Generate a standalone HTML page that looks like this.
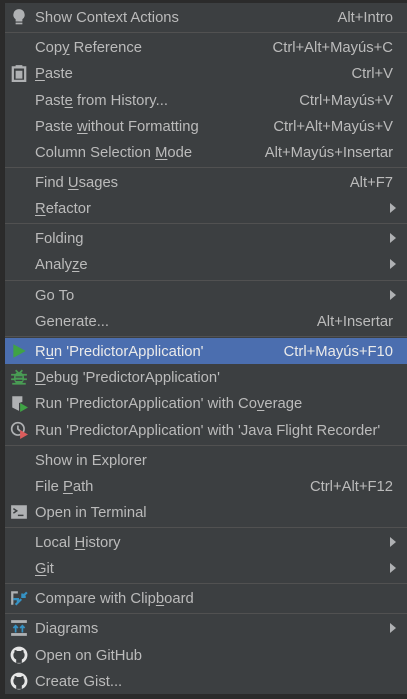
<!DOCTYPE html>
<html><head><style>
body{margin:0;width:407px;height:699px;background:#2b2b2b;overflow:hidden;font-family:"Liberation Sans",sans-serif;}
#m{position:absolute;left:4px;top:3px;width:403px;height:691px;background:#3c3f41;border-left:1px solid #2a2a2a;box-sizing:border-box;}
.r{position:absolute;left:0;right:0;height:26px;line-height:26px;color:#bbbbbb;font-size:14.8px;}
.r .t{position:absolute;left:30px;top:1px;}
.r .k{position:absolute;right:14px;top:1px;}
.r .a{position:absolute;right:11px;top:8px;width:0;height:0;border-left:6px solid #afb1b3;border-top:5px solid transparent;border-bottom:5px solid transparent;}
.r.h{background:#4b6eaf;color:#eaeaea;}
.s{position:absolute;left:0;right:0;height:1px;background:#515151;}
.i{position:absolute;left:5px;top:4px;width:18px;height:18px;}
u{text-decoration:underline;text-underline-offset:2px;}
</style></head><body>
<div id="m">
<div class="r" style="top:1px"><svg class="i" viewBox="0 0 16 16"><path d="M8 1a5 5 0 0 0-3 9v2h6v-2a5 5 0 0 0-3-9z" fill="#afb1b3"/><rect x="5" y="13" width="6" height="1.5" fill="#afb1b3"/></svg><span class="t">Show Context Actions</span><span class="k">Alt+Intro</span></div>
<div class="s" style="top:29px"></div>
<div class="r" style="top:31px"><span class="t">Cop<u>y</u> Reference</span><span class="k">Ctrl+Alt+Mayús+C</span></div>
<div class="r" style="top:57px"><svg class="i" viewBox="0 0 16 16"><rect x="2.5" y="3" width="11" height="12" fill="none" stroke="#afb1b3" stroke-width="2"/><rect x="5" y="1" width="6" height="3" fill="#afb1b3"/><rect x="5" y="6" width="6" height="7" fill="#afb1b3"/></svg><span class="t"><u>P</u>aste</span><span class="k">Ctrl+V</span></div>
<div class="r" style="top:84px"><span class="t">Past<u>e</u> from History...</span><span class="k">Ctrl+Mayús+V</span></div>
<div class="r" style="top:110px"><span class="t">Paste <u>w</u>ithout Formatting</span><span class="k">Ctrl+Alt+Mayús+V</span></div>
<div class="r" style="top:136px"><span class="t">Column Selection <u>M</u>ode</span><span class="k">Alt+Mayús+Insertar</span></div>
<div class="s" style="top:164px"></div>
<div class="r" style="top:166px"><span class="t">Find <u>U</u>sages</span><span class="k">Alt+F7</span></div>
<div class="r" style="top:192px"><span class="t"><u>R</u>efactor</span><span class="a"></span></div>
<div class="s" style="top:220px"></div>
<div class="r" style="top:222px"><span class="t">Folding</span><span class="a"></span></div>
<div class="r" style="top:248px"><span class="t">Analy<u>z</u>e</span><span class="a"></span></div>
<div class="s" style="top:277px"></div>
<div class="r" style="top:279px"><span class="t">Go To</span><span class="a"></span></div>
<div class="r" style="top:305px"><span class="t">Generate...</span><span class="k">Alt+Insertar</span></div>
<div class="s" style="top:333px"></div>
<div class="r h" style="top:335px"><svg class="i" viewBox="0 0 16 16"><path d="M3 2l11 6-11 6z" fill="#3fa345"/></svg><span class="t">R<u>u</u>n 'PredictorApplication'</span><span class="k">Ctrl+Mayús+F10</span></div>
<div class="r" style="top:361px"><svg class="i" viewBox="0 0 16 16"><ellipse cx="8" cy="9" rx="4.5" ry="5.5" fill="#499c54"/><path d="M1 6h14M1 10h14M2 14h12M5 2l2 2M11 2l-2 2" stroke="#499c54" stroke-width="1.5"/><path d="M5 8h6M5 11h6" stroke="#3c3f41" stroke-width="1.2"/></svg><span class="t"><u>D</u>ebug 'PredictorApplication'</span></div>
<div class="r" style="top:387px"><svg class="i" viewBox="0 0 16 16"><path d="M2 2h9v5l-3 1v7l-6-3z" fill="#afb1b3"/><path d="M9 8l7 4-7 4z" fill="#3fa345"/></svg><span class="t">Run 'PredictorApplication' with Co<u>v</u>erage</span></div>
<div class="r" style="top:414px"><svg class="i" viewBox="0 0 16 16"><circle cx="7" cy="7" r="5.5" fill="none" stroke="#afb1b3" stroke-width="1.5"/><path d="M7 4v3l2 2" stroke="#afb1b3" stroke-width="1.5" fill="none"/><path d="M9 8l7 4-7 4z" fill="#db5c5c"/></svg><span class="t">Run 'PredictorApplication' with 'Java Flight Recorder'</span></div>
<div class="s" style="top:442px"></div>
<div class="r" style="top:444px"><span class="t">Show in Explorer</span></div>
<div class="r" style="top:470px"><span class="t">File <u>P</u>ath</span><span class="k">Ctrl+Alt+F12</span></div>
<div class="r" style="top:496px"><svg class="i" viewBox="0 0 16 16"><rect x="1" y="2" width="14" height="12" fill="#afb1b3"/><path d="M3 5l3 2-3 2" stroke="#3c3f41" stroke-width="1.3" fill="none"/><path d="M7 11h5" stroke="#3c3f41" stroke-width="1.3"/></svg><span class="t">Open in Terminal</span></div>
<div class="s" style="top:524px"></div>
<div class="r" style="top:526px"><span class="t">Local <u>H</u>istory</span><span class="a"></span></div>
<div class="r" style="top:552px"><span class="t"><u>G</u>it</span><span class="a"></span></div>
<div class="s" style="top:580px"></div>
<div class="r" style="top:582px"><svg class="i" viewBox="0 0 16 16"><path d="M1 2h6v2H3v10H1z" fill="#afb1b3"/><path d="M5 14l5-5M3 9h4v3" stroke="#3592c4" stroke-width="2" fill="none"/><path d="M15 3l-4 4M11 4v3h3" stroke="#3592c4" stroke-width="2" fill="none"/></svg><span class="t">Compare with Clip<u>b</u>oard</span></div>
<div class="s" style="top:610px"></div>
<div class="r" style="top:612px"><svg class="i" viewBox="0 0 16 16"><rect x="1" y="1" width="14" height="2.5" fill="#afb1b3"/><rect x="1" y="12.5" width="14" height="2.5" fill="#afb1b3"/><path d="M5 12V6M3 8l2-2 2 2M11 12V6M9 8l2-2 2 2" stroke="#3592c4" stroke-width="1.5" fill="none"/></svg><span class="t">Diagrams</span><span class="a"></span></div>
<div class="r" style="top:639px"><svg class="i" viewBox="0 0 16 16"><circle cx="8" cy="8" r="7.5" fill="#e6e6e6"/><path d="M5.5 15v-3c-1-.5-2.5-1.5-2.5-4 0-1 .4-1.8 1-2.4-.1-.5-.1-1.4.3-2 1 0 1.7.5 2 .8h3.4c.3-.3 1-.8 2-.8.4.6.4 1.5.3 2 .6.6 1 1.4 1 2.4 0 2.5-1.5 3.5-2.5 4v3z" fill="#3c3f41"/></svg><span class="t">Open on GitHub</span></div>
<div class="r" style="top:665px"><svg class="i" viewBox="0 0 16 16"><circle cx="8" cy="8" r="7.5" fill="#e6e6e6"/><path d="M5.5 15v-3c-1-.5-2.5-1.5-2.5-4 0-1 .4-1.8 1-2.4-.1-.5-.1-1.4.3-2 1 0 1.7.5 2 .8h3.4c.3-.3 1-.8 2-.8.4.6.4 1.5.3 2 .6.6 1 1.4 1 2.4 0 2.5-1.5 3.5-2.5 4v3z" fill="#3c3f41"/></svg><span class="t">Create Gist...</span></div>
</div>
</body></html>
